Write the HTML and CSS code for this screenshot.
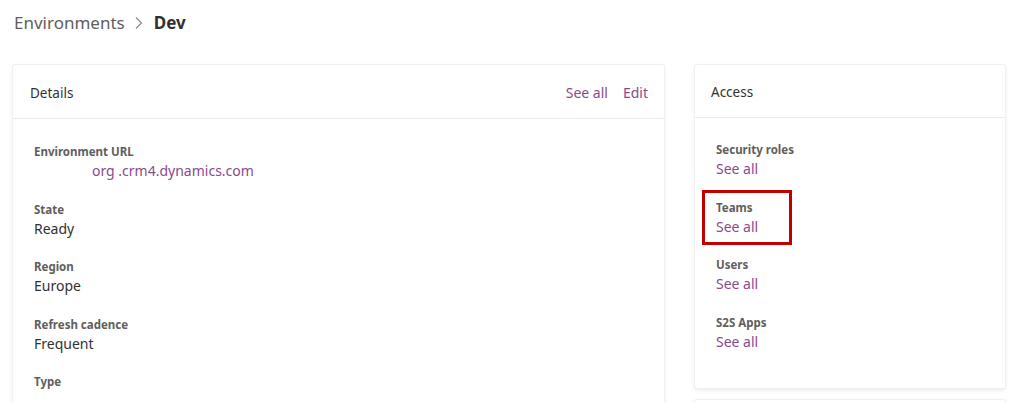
FILE: index.html
```html
<!DOCTYPE html>
<html>
<head>
<meta charset="utf-8">
<link rel="stylesheet" href="styles.css">
</head>
<body>
<nav class="crumbs">
  <span class="crumb">Environments</span>
  <svg class="chev" width="10" height="14" viewBox="0 0 10 14"><path d="M2 1.5 L7.5 7 L2 12.5" fill="none" stroke="#8a8886" stroke-width="1.2"/></svg>
  <span class="crumb current">Dev</span>
</nav>
<main class="layout">
  <section class="card details">
    <header class="card-head">
      <h2 class="card-title">Details</h2>
      <div class="head-links"><a class="link">See all</a><a class="link">Edit</a></div>
    </header>
    <div class="card-body">
      <div class="field"><div class="label">Environment URL</div><div class="value link url">org .crm4.dynamics.com</div></div>
      <div class="field"><div class="label">State</div><div class="value">Ready</div></div>
      <div class="field"><div class="label">Region</div><div class="value">Europe</div></div>
      <div class="field"><div class="label">Refresh cadence</div><div class="value">Frequent</div></div>
      <div class="field"><div class="label">Type</div></div>
    </div>
  </section>
  <div class="side">
    <section class="card access">
      <header class="card-head">
        <h2 class="card-title">Access</h2>
      </header>
      <div class="card-body">
        <div class="field"><div class="label">Security roles</div><a class="value link">See all</a></div>
        <div class="field highlighted"><div class="label">Teams</div><a class="value link">See all</a></div>
        <div class="field"><div class="label">Users</div><a class="value link">See all</a></div>
        <div class="field"><div class="label">S2S Apps</div><a class="value link">See all</a></div>
      </div>
    </section>
    <section class="card next"></section>
  </div>
</main>
</body>
</html>
```
FILE: styles.css
```css
* { box-sizing: border-box; }
html, body { height: 403px; overflow: hidden; }
body {
  margin: 0;
  background: #ffffff;
  font-family: "Segoe UI", "Noto Sans", "Open Sans", sans-serif;
  color: #323130;
}
.crumbs {
  display: flex;
  align-items: center;
  gap: 8px;
  padding: 5px 0 0 14px;
  height: 40px;
}
.crumb {
  font-size: 17px;
  color: #605e5c;
  line-height: 28px;
}
.crumb.current {
  font-weight: 700;
  color: #323130;
}
.chev { margin: 0 2px 0 1px; }
.layout {
  display: flex;
  align-items: flex-start;
  gap: 31px;
  padding: 25px 0 0 13px;
  height: 363px;
  overflow: hidden;
}
.card {
  background: #fff;
  box-shadow: 0 0 0 1px #f0f0f0, 0 1.6px 4px rgba(0,0,0,0.10);
  border-radius: 2px;
}
.details { width: 651px; height: 345px; }
.side { display: flex; flex-direction: column; gap: 12px; }
.access { width: 310px; height: 323px; }
.next { width: 310px; height: 40px; }
.card-head {
  display: flex;
  align-items: center;
  justify-content: space-between;
  height: 54px;
  padding: 2px 16px 0 17px;
  border-bottom: 1px solid #edebe9;
}
.access .card-head { height: 53px; padding-left: 16px; }
.card-title {
  margin: 0;
  font-size: 13.5px;
  font-weight: 400;
  color: #323130;
}
.head-links { display: flex; gap: 15px; }
.link {
  color: #8a4a90;
  font-size: 14px;
  text-decoration: none;
}
.card-body {
  display: flex;
  flex-direction: column;
  gap: 19.5px;
  padding: 24px 21px 0 21px;
}
.field { display: flex; flex-direction: column; }
.label {
  font-size: 11.5px;
  font-weight: 700;
  color: #605e5c;
  line-height: 18px;
}
.value {
  font-size: 14px;
  color: #323130;
  line-height: 20px;
}
.value.link { color: #8a4a90; }
.url { padding-left: 58px; }
.access .card-body { padding-top: 23px; }
.highlighted {
  outline: 3px solid #c00000;
  align-self: flex-start;
  padding: 6px 31px 5px 11px;
  margin: -6px 0 -5px -11px;
}
```
